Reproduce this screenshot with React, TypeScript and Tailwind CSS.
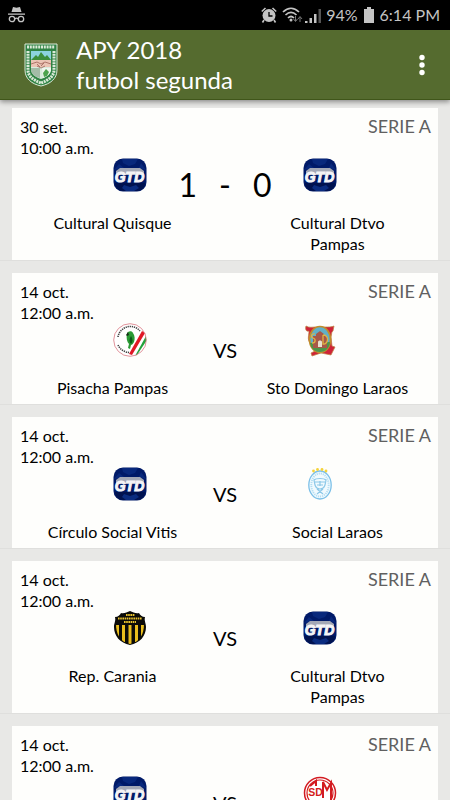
import type { ComponentType } from 'react';
import clsx from 'clsx';

interface Team {
  name: string;
  Logo: ComponentType;
}

interface Match {
  id: number;
  date: string;
  time: string;
  series: string;
  home: Team;
  away: Team;
  score?: [number, number];
}

function GtdLogo() {
  return (
    <svg viewBox="0 0 34 34" className="size-[34px]" aria-hidden="true">
      <rect x="0.5" y="0.5" width="33" height="33" rx="9.5" fill="#001a68" />
      <path d="M9 1h16l-3 5-6 2-6-3zM1 12l5-6 5 4zM28 5l5 7-7-2z" fill="#08287c" />
      <path d="M2 25h30c0 5-4 8-9 8H11c-5 0-9-3-9-8z" fill="#00124f" />
      <path d="M11 27l6 2 6-2 3 3-5 3h-8l-4-3z" fill="#0a2c80" />
      <path d="M7 10h20l4 3v4H3v-4z" fill="#a3a8b6" />
      <text
        x="16.5"
        y="23.5"
        textAnchor="middle"
        fontFamily="Liberation Sans, sans-serif"
        fontSize="14"
        fontWeight="700"
        fontStyle="italic"
        fill="#f4f4f6"
        stroke="#f4f4f6"
        strokeWidth="1"
      >
        GTD
      </text>
    </svg>
  );
}

function PisachaLogo() {
  return (
    <svg viewBox="0 0 34 34" className="size-[34px]" aria-hidden="true">
      <defs>
        <clipPath id="pisachaClip">
          <circle cx="17" cy="17" r="16.3" />
        </clipPath>
      </defs>
      <circle cx="17" cy="17" r="16.3" fill="#fff" />
      <g clipPath="url(#pisachaClip)">
        <path d="M29 8l3 2-13 22-3-1z" fill="#e01826" />
        <path d="M33 13l1 4-10 15-2 1z" fill="#24a23c" />
      </g>
      <path
        d="M5 14a12.5 12.5 0 0 1 22-6"
        fill="none"
        stroke="#444"
        strokeWidth="1.6"
        strokeDasharray="1.3 0.8"
      />
      <path
        d="M5 22a13 13 0 0 0 11 7.5"
        fill="none"
        stroke="#444"
        strokeWidth="1.6"
        strokeDasharray="1.3 0.8"
      />
      <path
        d="M14 11c0-3 5-4 6-1 2 3 2 6 1 9-1 2-2 3-3 3l-1 4-2-1 1-4c-2-2-3-6-2-10z"
        fill="#2a9a35"
      />
      <path d="M18 13c2 3 2 6 0 8-2-2-2-5 0-8z" fill="#0d5a1c" />
      <path d="M13 12l2-3 1 3-2 1z" fill="#143016" />
      <circle cx="17" cy="17" r="16.3" fill="none" stroke="#d97782" strokeWidth="0.8" />
    </svg>
  );
}

function SantoDomingoLogo() {
  return (
    <svg viewBox="0 0 34 34" className="size-[34px]" aria-hidden="true">
      <path
        d="M3 3c3 2 7 1 9 1h10c3 0 7 0 9-1l-1 5c-2 1-1 4-2 6l1 9 3 1-4 8-10-2-9 3-1-3 4-2-5-8c-3-4-1-8-1-12-3 1-4-2-3-5z"
        fill="#cf2338"
        stroke="#bb8440"
        strokeWidth="0.7"
      />
      <ellipse cx="17" cy="16.5" rx="10.5" ry="13" fill="#62b0c8" stroke="#c18d2b" strokeWidth="1.7" />
      <path d="M7 20l20-1c0 6-5 10-10 10S8 26 7 20z" fill="#4d9548" />
      <path d="M10 13h3v-2l4-3 4 3v2h3v12H10z" fill="#a85848" />
      <path d="M15 24v-5c0-2 4-2 4 0v5z" fill="#e8e0ce" />
      <path
        d="M12 11c-3-1-5 3-2 4s3 5-1 5M20 12v9c5 1 7-9 0-9"
        fill="none"
        stroke="#e0b443"
        strokeWidth="1.3"
      />
    </svg>
  );
}

function LaraosLogo() {
  return (
    <svg viewBox="0 0 34 34" className="size-[34px]" aria-hidden="true">
      <ellipse cx="17" cy="18" rx="11.2" ry="14" fill="#f1fafe" stroke="#7cc0e8" strokeWidth="1.3" />
      <ellipse
        cx="17"
        cy="18"
        rx="8.7"
        ry="11.5"
        fill="none"
        stroke="#b5def2"
        strokeWidth="1.9"
        strokeDasharray="1.2 0.9"
      />
      <path
        d="M11 13c2-2 10-2 12 0l-1 5c-1 3-3 4-5 4s-4-1-5-4zM12 15h10M17 14v5M14 22l6 5M20 22l-6 5M14 18h6"
        fill="none"
        stroke="#8cc8e8"
        strokeWidth="1.2"
      />
      <g fill="#f5d33b">
        <circle cx="10.5" cy="4" r="1.4" />
        <circle cx="14.5" cy="2.5" r="1.4" />
        <circle cx="19" cy="2.5" r="1.4" />
        <circle cx="23" cy="4" r="1.4" />
      </g>
    </svg>
  );
}

function CaraniaLogo() {
  return (
    <svg viewBox="0 0 34 34" className="size-[34px]" aria-hidden="true">
      <defs>
        <clipPath id="caraniaClip">
          <path d="M3 13h28c0 10-4 18-14 20C7 31 3 23 3 13z" />
        </clipPath>
      </defs>
      <path
        d="M2 6c3 0 5-2 6-4 3 1 6-1 9-2 3 1 6 3 9 2 1 2 3 4 6 4-1 4 1 6 1 10 0 9-6 16-16 18C7 32 1 25 1 16 1 12 3 10 2 6z"
        fill="#0b0b08"
      />
      <g clipPath="url(#caraniaClip)" fill="#e9bd1d">
        <path d="M3 14h3v20H3zM9 14h3v20H9zM15.500 14h3v20h-3zM22 14h3v20h-3zM28 14h3v20h-3z" />
      </g>
      <path
        d="M13 4h9M5 7.500h24M11 11h12"
        fill="none"
        stroke="#e9c32e"
        strokeWidth="1.8"
        strokeDasharray="1.6 0.6"
      />
    </svg>
  );
}

function DosDeMayoLogo() {
  return (
    <svg viewBox="0 0 34 34" className="size-[34px]" aria-hidden="true">
      <circle cx="17" cy="17" r="15.5" fill="#fff" stroke="#d31b20" strokeWidth="1.5" />
      <circle cx="17" cy="17" r="13" fill="none" stroke="#d31b20" strokeWidth="1.2" />
      <path d="M7 10l6-5v5M20 22V6l4 8 4-7v18" fill="none" stroke="#d31b20" strokeWidth="2" />
      <text
        x="12.5"
        y="20"
        textAnchor="middle"
        fontFamily="Liberation Sans, sans-serif"
        fontSize="10.5"
        fontWeight="700"
        fill="#d31b20"
      >
        SD
      </text>
    </svg>
  );
}

function LeagueCrest() {
  return (
    <svg viewBox="0 0 34 44" className="h-11 w-[34px]" aria-hidden="true">
      <path d="M1 1h32v26c0 9-7 14-16 16C8 41 1 36 1 27z" fill="#2f8344" stroke="#dbe8d8" />
      <path
        d="M3 4h28M4 8v19c0 6 5 10 13 13M30 8v19c0 6-5 10-13 13"
        fill="none"
        stroke="#dcead9"
        strokeWidth="3"
        strokeDasharray="2 0.8"
      />
      <path d="M7 8h20v18c0 5-4 8-10 10-6-2-10-5-10-10z" fill="#d9ebdd" />
      <path d="M7 8h20v9H7z" fill="#8bd3df" />
      <path d="M7 17l5-5 2 2 3-5 4 5 2-2 4 5z" fill="#3c8e3b" />
      <path d="M7 17h20v7H7z" fill="#ebc4b5" />
      <path
        d="M7 21l6-2 4 2 4-2 6 2M13 23l4 2 4-2M13 21l3 3M20 20l-3 3"
        fill="none"
        stroke="#9d6157"
        strokeWidth="0.8"
      />
      <path d="M7 25h9v10c-5-1-9-4-9-9z" fill="#a3bca7" />
      <path d="M18 25h9v1c0 4-3 7-8 9z" fill="#f0f5ee" />
      <path d="M22 26l3 3-2 4-3 1-1-4z" fill="#4da34e" />
    </svg>
  );
}

const quisque: Team = { name: 'Cultural Quisque', Logo: GtdLogo };
const pampas: Team = { name: 'Cultural Dtvo Pampas', Logo: GtdLogo };

const matches: Match[] = [
  {
    id: 1,
    date: '30 set.',
    time: '10:00 a.m.',
    series: 'SERIE A',
    home: quisque,
    away: pampas,
    score: [1, 0],
  },
  {
    id: 2,
    date: '14 oct.',
    time: '12:00 a.m.',
    series: 'SERIE A',
    home: { name: 'Pisacha Pampas', Logo: PisachaLogo },
    away: { name: 'Sto Domingo Laraos', Logo: SantoDomingoLogo },
  },
  {
    id: 3,
    date: '14 oct.',
    time: '12:00 a.m.',
    series: 'SERIE A',
    home: { name: 'Círculo Social Vitis', Logo: GtdLogo },
    away: { name: 'Social Laraos', Logo: LaraosLogo },
  },
  {
    id: 4,
    date: '14 oct.',
    time: '12:00 a.m.',
    series: 'SERIE A',
    home: { name: 'Rep. Carania', Logo: CaraniaLogo },
    away: pampas,
  },
  {
    id: 5,
    date: '14 oct.',
    time: '12:00 a.m.',
    series: 'SERIE A',
    home: quisque,
    away: { name: 'Sport Dos de Mayo', Logo: DosDeMayoLogo },
  },
];

function StatusBar() {
  return (
    <div className="flex h-[30px] shrink-0 items-center justify-between bg-black pr-[10px] pl-2 text-[#c4c4c4]">
      <svg viewBox="0 0 17 16" className="h-4 w-[17px]" fill="currentColor" aria-hidden="true">
        <path d="M5 0l3.5.7L12 0l1.5 5h-10zM0 6.5h17v1.3H0z" />
        <g fill="none" stroke="currentColor" strokeWidth="1.3">
          <circle cx="4" cy="12" r="2.7" />
          <circle cx="13" cy="12" r="2.7" />
          <path d="M6.7 12c1-1 2.6-1 3.6 0" />
        </g>
      </svg>
      <div className="flex items-center">
        <svg viewBox="0 0 16 16" className="size-4" aria-hidden="true">
          <circle cx="8" cy="8.5" r="6.5" fill="currentColor" />
          <path
            d="M.8 4.5L4.5 1M15.2 4.5L11.5 1M3 13l-1.5 2.5M13 13l1.5 2.5"
            stroke="currentColor"
            strokeWidth="1.6"
          />
          <path d="M8 5v4h3.5" fill="none" stroke="#000" strokeWidth="1.3" />
        </svg>
        <svg viewBox="0 0 21 16" className="ml-[5px] h-4 w-[21px]" fill="none" aria-hidden="true">
          <path
            d="M1 5c5-5 11-5 16 0M3.5 8c3.5-3.3 7.5-3.3 11 0M6 11c2-2 4-2 6 0"
            stroke="currentColor"
            strokeWidth="1.7"
          />
          <circle cx="9" cy="13" r="1.5" fill="currentColor" />
          <path d="M13.5 9v5M11.5 12l2 2.5 2-2.5M18 15v-5M16 12l2-2.5 2 2.5" stroke="#777" />
        </svg>
        <svg viewBox="0 0 16 16" className="ml-[2px] size-4" fill="currentColor" aria-hidden="true">
          <path d="M0 14h2.500v2H0zM4.500 11H7v5H4.500zM9 7h2.500v9H9z" />
          <path d="M13.5 2H16v14h-2.500z" fill="#555" />
        </svg>
        <span className="ml-[5px]">94%</span>
        <svg viewBox="0 0 10 16" className="mx-[6px] h-4 w-[10px]" fill="currentColor" aria-hidden="true">
          <path d="M3 0h4v2h3v14H0V2h3z" />
        </svg>
        <span>6:14 PM</span>
      </div>
    </div>
  );
}

function AppHeader() {
  return (
    <header className="relative z-10 flex shrink-0 items-center border-b border-[#40561a] bg-[#556b2f] pt-[5px] pr-3 pb-1 pl-6 text-white shadow-[0_2px_5px_rgba(0,0,0,0.4)]">
      <LeagueCrest />
      <h1 className="ml-[18px] flex-1 text-2xl leading-[30px]">
        APY 2018
        <br />
        futbol segunda
      </h1>
      <button type="button" aria-label="Más opciones" className="flex h-10 w-8 items-center justify-center">
        <svg viewBox="0 0 6 22" className="h-[22px] w-[6px]" fill="currentColor" aria-hidden="true">
          <circle cx="3" cy="3.5" r="2.7" />
          <circle cx="3" cy="11" r="2.7" />
          <circle cx="3" cy="18.5" r="2.7" />
        </svg>
      </button>
    </header>
  );
}

function MatchCard({ match }: { match: Match }) {
  const { home, away, score } = match;

  return (
    <li className="border-b border-[#dfdfdd] px-3">
      <article className="bg-[#fefefc] pt-2 pb-[6px]">
        <div className="flex justify-between pr-[7px] pl-2 leading-[21px]">
          <p>
            {match.date}
            <br />
            {match.time}
          </p>
          <p className="text-lg leading-[21px] text-[#606060]">{match.series}</p>
        </div>

        <div className="flex h-[54px] justify-center">
          <home.Logo />
          <div
            className={clsx(
              'flex w-[156px] items-center justify-center',
              score ? 'text-[32px]' : 'text-xl'
            )}
          >
            {score ? (
              <div className="grid w-28 grid-cols-3 text-center">
                <span>{score[0]}</span>
                <span>-</span>
                <span>{score[1]}</span>
              </div>
            ) : (
              'VS'
            )}
          </div>
          <away.Logo />
        </div>

        <div className="-mx-3 grid grid-cols-2 text-center leading-[21px]">
          <p className="px-10">{home.name}</p>
          <p className="px-10">{away.name}</p>
        </div>
      </article>
    </li>
  );
}

export default function App() {
  return (
    <div className="flex h-screen flex-col bg-[#e8e8e6] font-['Lato',sans-serif] text-base text-black">
      <StatusBar />
      <AppHeader />
      <main className="flex-1 overflow-y-auto [scrollbar-width:none]">
        <ul className="flex flex-col gap-3 pt-2">
          {matches.map((match) => (
            <MatchCard key={match.id} match={match} />
          ))}
        </ul>
      </main>
    </div>
  );
}
